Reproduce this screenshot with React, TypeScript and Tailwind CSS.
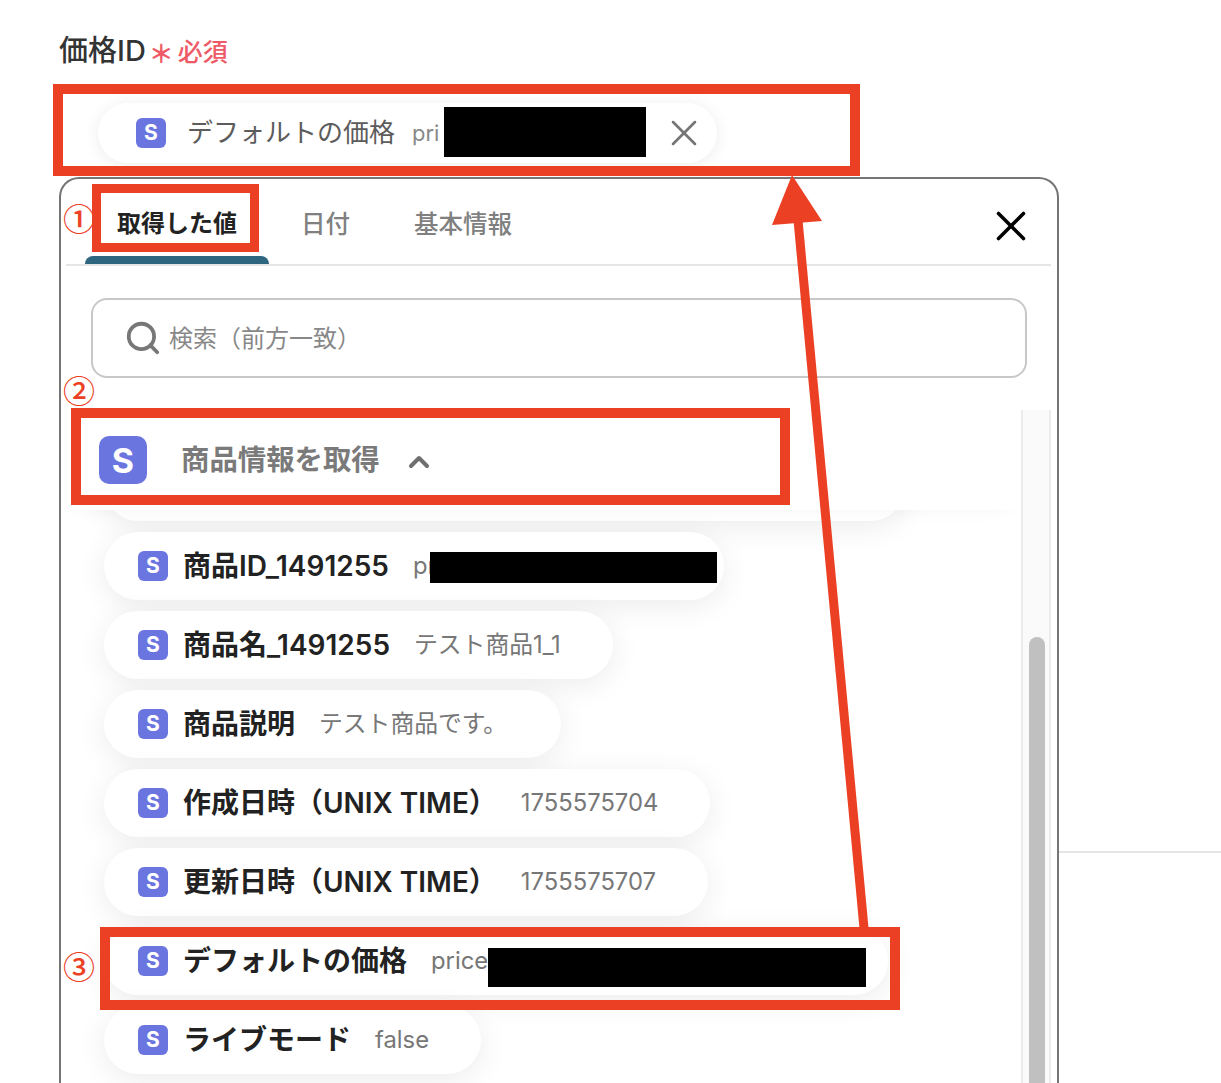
import { ChevronUp, Search, X } from 'lucide-react';

const rows = [
  { label: '商品ID_1491255', value: 'pr', pill: 'w-[620px]' },
  { label: '商品名_1491255', value: 'テスト商品1_1', pill: 'w-[509px]' },
  { label: '商品説明', value: 'テスト商品です。', pill: 'w-[457px]' },
  { label: '作成日時（UNIX TIME）', value: '1755575704', pill: 'w-[606px]' },
  { label: '更新日時（UNIX TIME）', value: '1755575707', pill: 'w-[604px]' },
  { label: 'デフォルトの価格', value: 'price', pill: 'w-[784px]' },
  { label: 'ライブモード', value: 'false', pill: 'w-[377px]' },
];

function StripeBadge({ large }: { large?: boolean }) {
  return (
    <span
      className={`flex shrink-0 items-center justify-center bg-[#6b75e0] font-bold text-white ${
        large ? 'h-[48px] w-[48px] rounded-[10px] text-[34px]' : 'h-[30px] w-[30px] rounded-[6px] text-[21px]'
      }`}
    >
      S
    </span>
  );
}

function Tab({ label, active }: { label: string; active?: boolean }) {
  return (
    <div className="flex h-full flex-col">
      <div
        className={`flex flex-1 items-center px-[32px] pt-[12px] leading-[32px] ${
          active ? 'text-[24px] font-bold text-[#222222]' : 'text-[24.5px] font-medium text-[#808080]'
        }`}
      >
        {label}
      </div>
      <div className={`h-[8px] rounded-t-[8px] ${active ? 'bg-[#2e6680]' : ''}`} />
    </div>
  );
}

function Annotations() {
  const circled = "absolute z-20 font-['Noto_Sans_CJK_JP',sans-serif] text-[32px] font-medium leading-[38px] text-[#ec4024]";

  return (
    <>
      <div className="absolute left-[53px] top-[84px] z-20 h-[92px] w-[807px] border-[10px] border-[#ec4024]" />
      <div className="absolute left-[92px] top-[184px] z-20 h-[68px] w-[167px] border-[9px] border-[#ec4024]" />
      <div className="absolute left-[71px] top-[408px] z-20 h-[97px] w-[719px] border-[10px] border-[#ec4024]" />
      <div className="absolute left-[100px] top-[927px] z-20 h-[83px] w-[800px] border-[10px] border-[#ec4024]" />

      <div className="absolute left-[444px] top-[107px] z-10 h-[50px] w-[202px] bg-black" />
      <div className="absolute left-[430px] top-[552px] z-10 h-[31px] w-[287px] bg-black" />
      <div className="absolute left-[488px] top-[948px] z-10 h-[39px] w-[378px] bg-black" />

      <span className={`${circled} left-[63px] top-[198px]`}>①</span>
      <span className={`${circled} left-[63px] top-[370px]`}>②</span>
      <span className={`${circled} left-[63px] top-[946px]`}>③</span>

      <svg className="absolute left-0 top-0 z-20" width="1221" height="1083" viewBox="0 0 1221 1083" fill="none">
        <path d="M798 220 L864 928" stroke="#ec4024" strokeWidth="9" />
        <path d="M792 175 L822 221 L772 225 Z" fill="#ec4024" />
      </svg>
    </>
  );
}

export default function App() {
  return (
    <div className="relative h-[1083px] w-[1221px] overflow-hidden bg-white font-[Inter,'Noto_Sans_CJK_JP',sans-serif]">
      <div className="absolute left-[1059px] top-[851px] h-[2px] w-[162px] bg-[#e5e5e5]" />

      <div className="flex h-full flex-col pl-[59px] pt-[32px]">
        <div className="flex h-[38px] items-center">
          <span className="text-[29px] font-medium leading-[38px] text-[#333333]">価格ID</span>
          <span className="ml-[3px] mt-[6px] text-[25px] font-bold leading-[34px] text-[#ee5a66]">＊</span>
          <span className="ml-[4px] mt-[2px] text-[25px] font-medium leading-[34px] text-[#ee5a66]">必須</span>
        </div>

        <div className="ml-[39px] mt-[33px] flex h-[60px] w-[619px] items-center rounded-full bg-white pl-[38px] shadow-[0_2px_16px_rgba(0,0,0,0.08)]">
          <StripeBadge />
          <span className="ml-[21px] text-[26px] leading-[34px] text-[#5c5c5c]">デフォルトの価格</span>
          <span className="ml-[17px] text-[22px] leading-[30px] text-[#888888]">pri</span>
          <X className="absolute left-[662px] top-[111px] text-[#757575]" size={44} strokeWidth={1.4} />
        </div>

        <div className="mt-[14px] flex min-h-0 w-[1000px] flex-1 flex-col rounded-t-[20px] border-2 border-b-0 border-[#757575] bg-white">
          <div className="ml-[5px] mr-[6px] flex h-[87px] shrink-0 items-stretch justify-between border-b-2 border-[#e5e5e5] pl-[19px] pr-[15px]">
            <div className="flex items-stretch">
              <Tab active label="取得した値" />
              <Tab label="日付" />
              <Tab label="基本情報" />
            </div>
            <X className="mt-[22px] text-black" size={50} strokeWidth={1.7} />
          </div>

          <div className="mx-[30px] mt-[32px] flex h-[80px] shrink-0 items-center rounded-[16px] border-2 border-[#c8c8c8] pl-[31px]">
            <Search className="text-[#777777]" size={38} strokeWidth={2.4} />
            <span className="ml-[7px] mt-[2px] text-[24px] leading-[30px] text-[#888888]">検索（前方一致）</span>
          </div>

          <div className="mt-[32px] flex min-h-0 flex-1">
            <div className="min-w-0 flex-1">
              <div className="relative z-[1] flex h-[100px] items-center bg-white pl-[38px] shadow-[0_10px_20px_-14px_rgba(0,0,0,0.06)]">
                <StripeBadge large />
                <span className="ml-[34px] text-[28.4px] font-semibold leading-[38px] text-[#7a7a7a]">商品情報を取得</span>
                <ChevronUp className="ml-[23px] mt-[3px] text-[#6f6f6f]" size={32} strokeWidth={3} />
              </div>

              <div className="ml-[43px] mt-[-57px] flex flex-col gap-[11px]">
                <div className="h-[68px] w-[801px] rounded-full bg-white shadow-[0_6px_30px_rgba(0,0,0,0.08)]" />
                {rows.map((row) => (
                  <div
                    className={`flex h-[68px] items-center rounded-full bg-white pl-[34px] shadow-[0_6px_30px_rgba(0,0,0,0.08)] ${row.pill}`}
                    key={row.label}
                  >
                    <StripeBadge />
                    <span className="ml-[15px] whitespace-nowrap text-[28px] font-semibold leading-[38px] text-[#222222]">
                      {row.label}
                    </span>
                    <span className="ml-[24px] whitespace-nowrap text-[23.8px] leading-[32px] text-[#777777]">
                      {row.value}
                    </span>
                  </div>
                ))}
              </div>
            </div>

            <div className="relative z-[2] mr-[6px] w-[30px] shrink-0 border-x-2 border-[#ececec] bg-[#fafafa] pl-[6px] pt-[227px]">
              <div className="h-[600px] w-[16px] rounded-t-full bg-[#c0c0c0]" />
            </div>
          </div>
        </div>
      </div>

      <Annotations />
    </div>
  );
}
